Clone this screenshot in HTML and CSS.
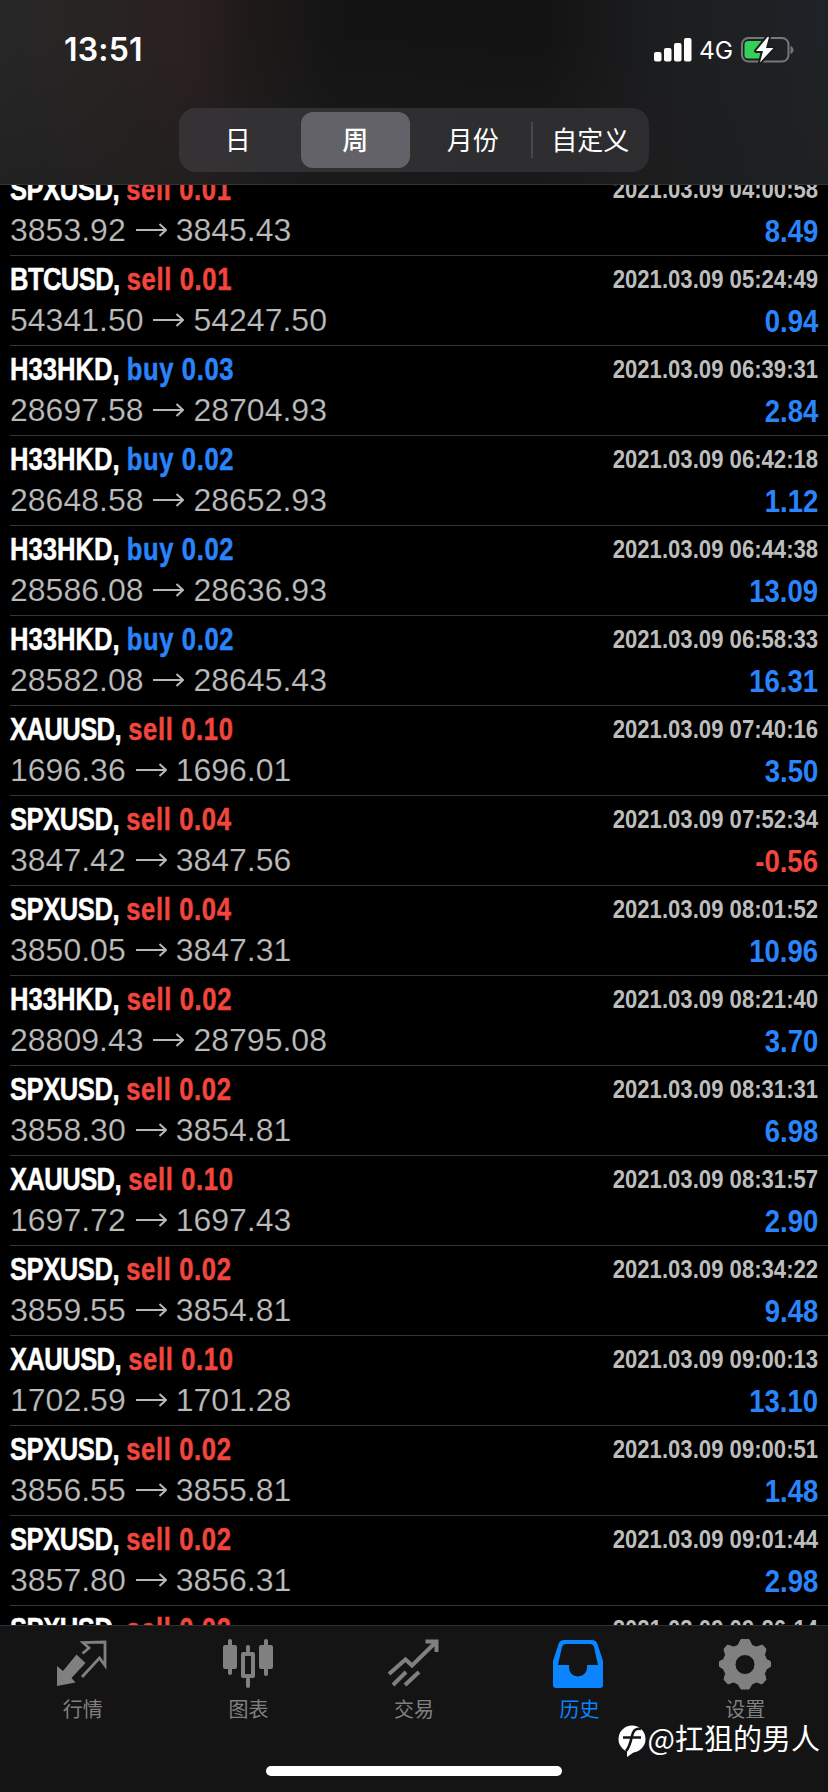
FILE: index.html
```html
<!DOCTYPE html>
<html lang="zh-CN">
<head>
<meta charset="utf-8">
<title>历史</title>
<link rel="stylesheet" href="styles.css">
</head>
<body>
<div class="screen">
  <header class="header">
    <div class="status">
      <span class="time">13:51</span>
      <div class="status-right">
        <svg class="signal" width="38" height="24" viewBox="0 0 38 24" fill="#fff"><rect x="0" y="14" width="7.5" height="9.5" rx="2"/><rect x="10" y="10" width="7.5" height="13.5" rx="2"/><rect x="20" y="5" width="7.5" height="18.5" rx="2"/><rect x="30" y="0" width="7.5" height="23.5" rx="2"/></svg>
        <span class="net">4G</span>
        <svg class="battery" width="54" height="28" viewBox="0 0 54 28"><rect x="1" y="2" width="46.5" height="23.5" rx="6.5" fill="none" stroke="#77777a" stroke-width="2"/><path d="M49.5 10v8c4-1.500 4-6.500 0-8z" fill="#77777a"/><path d="M7 5h18v17.500H7a3.500 3.500 0 0 1-3.500-3.500V8.500A3.500 3.500 0 0 1 7 5z" fill="#33d158"/><path d="M26.500 1 15 15h7l-3 11.500L32.500 12h-7.500l3-11z" fill="#fff" stroke="#1b1b1c" stroke-width="4" stroke-linejoin="round" paint-order="stroke"/></svg>
      </div>
    </div>
    <nav class="segments">
      <span class="segment">日</span>
      <span class="segment selected">周</span>
      <span class="segment">月份</span>
      <span class="segment divided">自定义</span>
    </nav>
  </header>
  <svg class="defs" width="0" height="0"><symbol id="arrow" viewBox="0 0 31 14"><path d="M0 7h30M23.500 1l6.500 6-6.500 6" fill="none" stroke="#b8b8b8" stroke-width="2"/></symbol></svg>
  <main class="list">
    <article class="row"><div class="deal"><b class="spx">SPXUSD,</b> <span class="sell">sell 0.01</span></div><time>2021.03.09 04:00:58</time><div class="price">3853.92<svg><use href="#arrow"/></svg>3845.43</div><div class="profit">8.49</div></article>
    <article class="row"><div class="deal"><b class="btc">BTCUSD,</b> <span class="sell">sell 0.01</span></div><time>2021.03.09 05:24:49</time><div class="price">54341.50<svg><use href="#arrow"/></svg>54247.50</div><div class="profit">0.94</div></article>
    <article class="row"><div class="deal"><b>H33HKD,</b> <span class="buy">buy 0.03</span></div><time>2021.03.09 06:39:31</time><div class="price">28697.58<svg><use href="#arrow"/></svg>28704.93</div><div class="profit">2.84</div></article>
    <article class="row"><div class="deal"><b>H33HKD,</b> <span class="buy">buy 0.02</span></div><time>2021.03.09 06:42:18</time><div class="price">28648.58<svg><use href="#arrow"/></svg>28652.93</div><div class="profit">1.12</div></article>
    <article class="row"><div class="deal"><b>H33HKD,</b> <span class="buy">buy 0.02</span></div><time>2021.03.09 06:44:38</time><div class="price">28586.08<svg><use href="#arrow"/></svg>28636.93</div><div class="profit">13.09</div></article>
    <article class="row"><div class="deal"><b>H33HKD,</b> <span class="buy">buy 0.02</span></div><time>2021.03.09 06:58:33</time><div class="price">28582.08<svg><use href="#arrow"/></svg>28645.43</div><div class="profit">16.31</div></article>
    <article class="row"><div class="deal"><b class="xau">XAUUSD,</b> <span class="sell">sell 0.10</span></div><time>2021.03.09 07:40:16</time><div class="price">1696.36<svg><use href="#arrow"/></svg>1696.01</div><div class="profit">3.50</div></article>
    <article class="row"><div class="deal"><b class="spx">SPXUSD,</b> <span class="sell">sell 0.04</span></div><time>2021.03.09 07:52:34</time><div class="price">3847.42<svg><use href="#arrow"/></svg>3847.56</div><div class="profit loss">-0.56</div></article>
    <article class="row"><div class="deal"><b class="spx">SPXUSD,</b> <span class="sell">sell 0.04</span></div><time>2021.03.09 08:01:52</time><div class="price">3850.05<svg><use href="#arrow"/></svg>3847.31</div><div class="profit">10.96</div></article>
    <article class="row"><div class="deal"><b>H33HKD,</b> <span class="sell">sell 0.02</span></div><time>2021.03.09 08:21:40</time><div class="price">28809.43<svg><use href="#arrow"/></svg>28795.08</div><div class="profit">3.70</div></article>
    <article class="row"><div class="deal"><b class="spx">SPXUSD,</b> <span class="sell">sell 0.02</span></div><time>2021.03.09 08:31:31</time><div class="price">3858.30<svg><use href="#arrow"/></svg>3854.81</div><div class="profit">6.98</div></article>
    <article class="row"><div class="deal"><b class="xau">XAUUSD,</b> <span class="sell">sell 0.10</span></div><time>2021.03.09 08:31:57</time><div class="price">1697.72<svg><use href="#arrow"/></svg>1697.43</div><div class="profit">2.90</div></article>
    <article class="row"><div class="deal"><b class="spx">SPXUSD,</b> <span class="sell">sell 0.02</span></div><time>2021.03.09 08:34:22</time><div class="price">3859.55<svg><use href="#arrow"/></svg>3854.81</div><div class="profit">9.48</div></article>
    <article class="row"><div class="deal"><b class="xau">XAUUSD,</b> <span class="sell">sell 0.10</span></div><time>2021.03.09 09:00:13</time><div class="price">1702.59<svg><use href="#arrow"/></svg>1701.28</div><div class="profit">13.10</div></article>
    <article class="row"><div class="deal"><b class="spx">SPXUSD,</b> <span class="sell">sell 0.02</span></div><time>2021.03.09 09:00:51</time><div class="price">3856.55<svg><use href="#arrow"/></svg>3855.81</div><div class="profit">1.48</div></article>
    <article class="row"><div class="deal"><b class="spx">SPXUSD,</b> <span class="sell">sell 0.02</span></div><time>2021.03.09 09:01:44</time><div class="price">3857.80<svg><use href="#arrow"/></svg>3856.31</div><div class="profit">2.98</div></article>
    <article class="row"><div class="deal"><b class="spx">SPXUSD,</b> <span class="sell">sell 0.02</span></div><time>2021.03.09 09:26:14</time></article>
  </main>
  <footer class="tabbar">
    <nav class="tabs">
      <div class="tab"><svg width="52" height="52" viewBox="0 0 52 52"><path d="M1 27l6 5L20.500 15.500l9 8.500L15.500 39l4 4.500L1 47z" fill="currentColor"/><path d="M26.500 14.500l6.500-5.500-6-5.500 22-.5v23.500l-5.500-7.500-17.500 19" fill="none" stroke="currentColor" stroke-width="2.800"/></svg>行情</div>
      <div class="tab"><svg width="52" height="52" viewBox="0 0 52 52"><g fill="currentColor"><rect x="1" y="6" width="14" height="24" rx="2"/><rect x="6" y="0" width="4" height="36" rx="2"/><rect x="37" y="6" width="14" height="24" rx="2"/><rect x="42" y="0" width="4" height="37" rx="2"/><rect x="24" y="6" width="4" height="8" rx="2"/><rect x="24" y="38" width="4" height="11" rx="2"/></g><rect x="21" y="15" width="10" height="22" fill="none" stroke="currentColor" stroke-width="4" stroke-linejoin="round"/></svg>图表</div>
      <div class="tab"><svg width="52" height="52" viewBox="0 0 52 52"><path d="M2 35 18.500 20.500l6.500 6L48 4M38.500 2.500H49.500v10.500M6 46l13-13M18 46l14-13" fill="none" stroke="currentColor" stroke-width="4"/></svg>交易</div>
      <div class="tab active"><svg width="52" height="52" viewBox="0 0 52 52"><path fill-rule="evenodd" fill="currentColor" d="M12 1h28q4 0 5.500 4L51 22v24q0 3-3 3H4q-3 0-3-3V22L6.500 5Q8 1 12 1zM14 5q-3 0-4 3L6 26h11v3a9 8.500 0 0 0 18 0v-3h11L42 8q-1-3-4-3z"/></svg>历史</div>
      <div class="tab"><svg width="52" height="52" viewBox="0 0 52 52"><path fill-rule="evenodd" fill="currentColor" stroke="currentColor" stroke-width="1" stroke-linejoin="round" d="M22 .5h8l3 6 4.500 1.500 6-2 3.500 4-1.500 6 2 4.500 4 2v5l-4 2.500-2 4.500 1.500 6-4 4.500-5.500-2-4.500 2-3 5h-8l-3-5-4.500-2-5.500 2-4-4.500 1.500-6-2-4.500-4-2.500v-5l4-2 2-4.500-1.500-6 3.500-4 6 2 4.500-1.500zM26 15.500a10 10 0 1 0 0 20 10 10 0 1 0 0-20z"/></svg>设置</div>
    </nav>
    <div class="home"></div>
    <div class="watermark"><svg width="28" height="32" viewBox="0 0 28 32"><circle cx="14" cy="14" r="13.500" fill="#fff"/><path d="M9 25v7l10-7z" fill="#fff"/><path d="M23 4c-6-1-8 2-9 7-2 9-3 12-6 15M5 12.500h18" fill="none" stroke="#141414" stroke-width="2.600"/></svg><span>@扛狙的男人</span></div>
  </footer>
</div>
</body>
</html>
```
FILE: styles.css
```css
* { box-sizing: border-box; }

body {
  margin: 0;
  background: #000;
  font-family: "Liberation Sans", "Noto Sans CJK SC", sans-serif;
}

.screen {
  display: flex;
  flex-direction: column;
  width: 828px;
  height: 1792px;
  overflow: hidden;
}

.header {
  flex: none;
  height: 185px;
  border-bottom: 1px solid #353535;
  background:
    linear-gradient(to bottom, rgba(30, 30, 30, 0) 20%, rgba(30, 30, 30, 0.6) 100%),
    linear-gradient(to right, #272727 0, #292323 120px, #2b2020 190px, #1d1919 260px, #141414 340px, #131313 540px, #1c1d1f 660px, #1f2327 828px);
}

.status {
  display: flex;
  justify-content: space-between;
  height: 108px;
  padding: 30px 33px 0 64px;
}

.time {
  font: 600 32px/40px Inter, sans-serif;
  letter-spacing: 0.2px;
  color: #fff;
}

.status-right {
  display: flex;
  align-items: flex-start;
}

.signal { margin: 8px 7px 0 0; }

.net {
  width: 36px;
  margin-right: 6px;
  font: 400 24.5px/41px Inter, sans-serif;
  color: #fff;
}

.battery { margin-top: 6px; }

.segments {
  display: grid;
  grid-template-columns: repeat(4, 1fr);
  width: 470px;
  height: 64px;
  margin: 0 auto;
  padding: 4px 0;
  border-radius: 17px;
  background: linear-gradient(to right, #343234, #2e2e31 60%, #2d2d30);
}

.segment {
  margin: 0 4.5px;
  border-radius: 12px;
  font: 400 26px/54px "Noto Sans CJK SC", sans-serif;
  text-align: center;
  color: #fff;
}

.selected {
  background: #636268;
  font-weight: 500;
}

.divided {
  position: relative;
  white-space: nowrap;
}

.divided::before {
  content: "";
  position: absolute;
  left: -5px;
  top: 10px;
  width: 2px;
  height: 36px;
  background: #48484b;
}

.defs { position: absolute; }

.list {
  flex: 1;
  min-height: 0;
  overflow: hidden;
}

.row {
  display: grid;
  grid-template-columns: 1fr auto;
  grid-auto-rows: 40px;
  row-gap: 1px;
  height: 90px;
  margin-left: 10px;
  padding: 3px 10px 0 0;
  border-bottom: 1px solid #363636;
  line-height: 40px;
  font-size: 32px;
  white-space: nowrap;
}

.row:first-child { margin-top: -19px; }

.deal {
  font-weight: 700;
  color: #fff;
  -webkit-text-stroke: 0.5px;
  transform: scaleX(0.8);
  transform-origin: left;
}

.spx { letter-spacing: -0.6px; }
.btc, .xau { letter-spacing: -0.75px; }

.sell,
.buy { letter-spacing: 0.8px; }
.sell { color: #f1453d; }
.buy { color: #2a84fb; }

time {
  justify-self: end;
  font-size: 25px;
  font-weight: 700;
  color: #bdbdbd;
  transform: scaleX(0.885);
  transform-origin: right;
}

.price {
  color: #bcbcbc;
  -webkit-text-stroke: 0.2px #000;
}

.price svg {
  width: 31px;
  height: 14px;
  margin: 0 9px 4px 10px;
}

.profit {
  justify-self: end;
  padding-top: 1px;
  font-weight: 700;
  color: #2a84fb;
  transform: scaleX(0.86);
  transform-origin: right;
}

.loss { color: #f1453d; }

.tabbar {
  position: relative;
  flex: none;
  height: 167px;
  border-top: 1px solid #303030;
  background: #141414;
}

.tabs {
  display: grid;
  grid-template-columns: repeat(5, 1fr);
  padding-top: 13px;
}

.tab {
  display: flex;
  flex-direction: column;
  align-items: center;
  font: 400 20px/28px "Noto Sans CJK SC", sans-serif;
  color: #808080;
}

.tab svg { margin: 0 1px 4px 0; }
.tab.active svg { margin-right: 3px; }
.active { color: #0a84ff; }

.home {
  width: 296px;
  height: 10px;
  margin: 43px auto 0;
  border-radius: 5px;
  background: #fff;
}

.watermark {
  position: absolute;
  right: 8px;
  top: 96px;
  display: flex;
  align-items: center;
  gap: 2px;
  height: 34px;
  font: 400 29px/30px "Noto Sans CJK SC", sans-serif;
  color: #fff;
}

.watermark span { margin-top: -4px; }
.watermark svg { margin-top: 4px; }
```
